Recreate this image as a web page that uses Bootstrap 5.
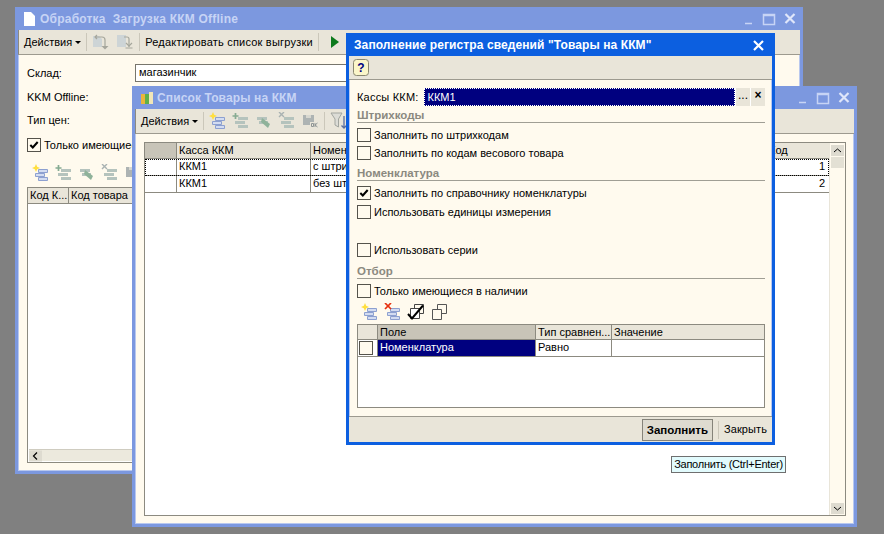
<!DOCTYPE html>
<html lang="ru">

<head>
    <meta charset="UTF-8">
    <title>Заполнение регистра сведений</title>
    <link href="https://cdn.jsdelivr.net/npm/bootstrap@5.3.0/dist/css/bootstrap.min.css" rel="stylesheet">
    <style>
        body {
            background: #808080;
            font: 11px/13px "Liberation Sans", Arial, sans-serif;
            color: #000;
            overflow: hidden;
        }

        /* windows on the desktop */
        .win {
            position: absolute;
            display: flex;
            flex-direction: column;
            background: #fffaee;
            border: 3px solid #7c98df;
            border-top-width: 1px;
            box-shadow: 0 0 0 1px #b9c8ee inset;
        }

        #winForm { left: 15px; top: 7px; width: 788px; height: 467px; }
        #winList { left: 132px; top: 86px; width: 725px; height: 441px; }
        #winFill { left: 346px; top: 33px; width: 429px; height: 412px; border-color: #0c5fe0; }

        .win-title {
            height: 22px;
            flex: none;
            font-weight: 700;
            font-size: 12px;
            letter-spacing: .12px;
            color: #c7d4f5;
            background: #7c98df;
            padding-left: 5px;
        }

        #winFill .win-title { background: #0c5fe0; color: #fff; letter-spacing: .1px; }
        #winForm .title-text { margin-left: 4px; letter-spacing: .22px; }
        #winList .title-text { margin-left: 3px; }

        .tool-row {
            height: 25px;
            flex: none;
            background: #e9e5d9;
            border-bottom: 1px solid #9d9a8f;
            border-left: 1px solid #8c8a80;
            padding-left: 5px;
        }

        #winFill .tool-row { border-left: 0; padding-left: 4px; }
        #winFill .help-row { height: 24px; }
        #winFill .foot-row { height: 26px; border-top: 1px solid #9d9a8f; border-bottom: 0; padding-right: 5px; }

        .tool-sep { width: 1px; height: 18px; background: #cbc7ba; margin: 0 5px; flex: none; }
        .tool-arrow { width: 0; height: 0; border: 3px solid transparent; border-top: 3px solid #000; border-bottom: 0; margin-left: 3px; }
        .tool-wide { letter-spacing: .21px; }
        .play-ico { margin-left: 6px; }
        .ico-step { margin-left: 5px; }
        #winForm .ico-step { margin-left: 6px; }

        .grid-box { border: 1px solid #8c8a80; background: #fff; position: relative; }
        .grid-head { height: 16px; background: #e9e5d9; border-bottom: 1px solid #8c8a80; }
        .grid-line { height: 17px; border-bottom: 1px solid #8c8a80; }
        .grid-cell { border-right: 1px solid #8c8a80; padding-left: 2px; white-space: nowrap; overflow: hidden; height: 100%; line-height: 15px; flex: none; }
        .grid-num { line-height: 15px; }
        .row-focus { outline: 1px dotted #000; outline-offset: -1px; }
        .head-dark { background: #c8c4b8; }

        .chk { width: 14px; height: 14px; border: 1px solid #55534c; background: #fffaee; flex: none; display: block; }
        .chk-line { height: 18px; }
        .chk-text { margin-left: 3px; }

        .grp-title { color: #8b8980; font-weight: 700; font-size: 11.5px; line-height: 14px; height: 17px; padding-top: 2px; border-bottom: 1px solid #a09e94; margin-top: 2px; }
        .grp-first { margin-top: 0; }
        .grp-last { margin-top: 3px; }
        .row-after { margin-top: 3px; }
        .row-step { margin-top: 1px; }
        .row-gap { margin-top: 20px; }

        .pick { background: #00007f; color: #fff; }
        .pick-field { line-height: 18px; outline: 1px dotted #fff; outline-offset: -1px; }
        .kkm-row { height: 18px; }
        .kkm-label { margin-right: 5px; letter-spacing: .2px; }
        .kkm-btn { width: 15px; background: #e9e5d9; border-left: 1px solid #fff; line-height: 15px; text-align: center; font-size: 12px; }

        .body-fill { padding: 8px 7px 0 8px; }
        .ico-row { display: flex; gap: 5px; height: 18px; margin-top: 3px; margin-bottom: 3px; padding-left: 4px; }
        .grid-end { margin-bottom: 8px; }
        #winFill .grid-head { height: 15px; }

        /* column widths */
        .col-chk { width: 20px; display: flex; align-items: center; padding-left: 1px; }
        .col-field { width: 158px; }
        .col-type { width: 76px; }
        .col-mark { width: 32px; }
        .col-kkm { width: 134px; }
        .col-nom { width: 200px; }
        .col-code { width: 41px; }
        .col-goods { width: 70px; }
        .col-val { padding-left: 2px; line-height: 15px; }
        .col-hid { margin-left: 258px; line-height: 15px; }

        /* form window */
        .form-body { padding: 8px 9px 8px 9px; }
        .form-row { height: 20px; line-height: 20px; }
        .form-row + .form-row { margin-top: 3px; }
        .form-first { margin-bottom: 1px; }
        .form-input { background: #fff; border: 1px solid #77756c; width: 600px; height: 18px; line-height: 15px; padding-left: 3px; margin-left: 72px; }
        .form-lab { width: 36px; flex: none; }
        .form-chk { height: 22px; margin-top: 4px; }
        .form-ico { display: flex; gap: 5px; height: 18px; margin: 8px 0 5px 5px; }
        .list-body { padding: 8px 8px 8px 9px; }
        .list-main { min-width: 0; }

        .hbar { height: 12px; margin: 1px; background: #ece9dd; border-top: 1px solid #cfccc0; }
        .sbar { width: 16px; flex: none; background: #fffaee; border-left: 1px solid #e9e5d9; padding: 2px 1px 0; }
        .sbar-thumb { width: 13px; height: 11px; background: #e3e0d4; margin-top: 1px; }
        .sbar-end { margin-top: auto; margin-bottom: 1px; }

        .tip {
            position: absolute;
            left: 671px;
            top: 456px;
            width: 115px;
            height: 17px;
            background: #e2fbfd;
            border: 1px solid #6f6f6f;
            line-height: 15px;
            text-align: center;
            white-space: nowrap;
            letter-spacing: -.25px;
        }

        .btn-fill {
            width: 71px;
            height: 22px;
            font-weight: 700;
            font-size: 11.5px;
            line-height: 20px;
            text-align: center;
            background: #dedbd0;
            border: 1px solid #85837a;
        }

        .foot-close { letter-spacing: .1px; }
    </style>
</head>

<body>
    <svg width="0" height="0" class="position-absolute">
        <defs>
            <g id="bars">
                <path d="M6.500 5.500h9v3h-9zM3.500 9.500h9v3h-9zM6.500 13.500h9v3h-9z" fill="#d3dcf1" stroke="#8da0d0" />
            </g>
            <symbol id="icoAdd" viewBox="0 0 18 18">
                <use href="#bars" />
                <path d="M4 0l1.200 2.800 2.800 1.200-2.800 1.200-1.200 2.800-1.200-2.800-2.800-1.200 2.800-1.200z" fill="#ffdf3f" />
            </symbol>
            <symbol id="icoDel" viewBox="0 0 18 18">
                <use href="#bars" />
                <path d="M1 0l6 6M7 0l-6 6" stroke="#e6300f" stroke-width="1.700" />
            </symbol>
            <symbol id="icoOff" viewBox="0 0 18 18">
                <path d="M6 5h10v3H6zM3 9h10v3H3zM6 13h10v3H6z" fill="#b5c3bd" />
                <path d="M3.500 1v6M.5 4h6" stroke="#86ab92" stroke-width="1.700" />
            </symbol>
            <symbol id="icoEdit" viewBox="0 0 18 18">
                <path d="M2 5h10v3H2zM4 9h9v3H4z" fill="#b5c3bd" />
                <path d="M7 6l8 6-2 4-7-6z" fill="#8fb29a" />
            </symbol>
            <symbol id="icoCross" viewBox="0 0 18 18">
                <path d="M6 5h10v3H6zM3 9h10v3H3zM6 13h10v3H6z" fill="#b5c3bd" />
                <path d="M1 0l5 5M6 0l-5 5" stroke="#a9b2b2" stroke-width="1.400" />
            </symbol>
            <symbol id="icoOk" viewBox="0 0 18 18">
                <path d="M2 3h11v10H2z" fill="#adb3b3" />
                <path d="M5 3h5v3H5z" fill="#d7d7d0" />
                <path d="M9 10h8v6H9z" fill="#e9e5d9" />
                <path d="M10.500 11.500h2v3h-2zM14 11v4M16.500 11l-2.500 2 2.500 2" fill="none" stroke="#8f9595" />
            </symbol>
            <symbol id="icoUp" viewBox="0 0 18 18">
                <path d="M1 3h6l3 3v8H1z" fill="#cdd4d6" />
                <path d="M5 2L3 4l2 2M3 4h7q3 0 3 3v6" fill="none" stroke="#a5a69c" stroke-width="1.200" />
                <path d="M9.500 13h7l-3.500 3.500z" fill="#a5a69c" />
            </symbol>
            <symbol id="icoDown" viewBox="0 0 18 18">
                <path d="M1 2h9v12H1z" fill="#cdd4d6" />
                <path d="M8 4h3q2 0 2 2v8" fill="none" stroke="#a5a69c" stroke-width="1.200" />
                <path d="M10 10l3 3 3-3M9.500 15h7" fill="none" stroke="#a5a69c" stroke-width="1.200" />
            </symbol>
            <symbol id="icoFilter" viewBox="0 0 18 18">
                <path d="M1 1h11L8.500 7v8L5 13V7z" fill="#dcdcd6" stroke="#a2a59f" />
                <path d="M14 4v12M11.500 13.500l2.500 2.500 2.500-2.500" fill="none" stroke="#5a6f9e" stroke-width="1.300" />
            </symbol>
            <symbol id="icoChecks" viewBox="0 0 18 18">
                <path d="M7.500 1.500h9v9h-9z" fill="none" stroke="#444" />
                <path d="M3.500 5.500h9v10h-9z" fill="#fff" stroke="#444" />
                <path d="M1 11l4 4.500 11-13" fill="none" stroke="#000" stroke-width="2" />
            </symbol>
            <symbol id="icoCopies" viewBox="0 0 18 18">
                <path d="M7.500 1.500h9v9h-9z" fill="#fffaee" stroke="#555" />
                <path d="M2.500 6.500h9v10h-9z" fill="#fffaee" stroke="#555" />
            </symbol>
            <symbol id="icoTick" viewBox="0 0 13 13">
                <path d="M2.500 6.500l2.700 2.700 5.300-6" fill="none" stroke="#000" stroke-width="2.200" />
            </symbol>
            <symbol id="winCtl" viewBox="0 0 58 14">
                <path d="M3 11.500h7M21.500 2.500h11v10h-11zM21 3.500h12" fill="none" stroke="#c7d4f5" stroke-width="1.500" />
                <path d="M43.500 2l9 9M52.500 2l-9 9" stroke="#dfe6fa" stroke-width="2.200" />
            </symbol>
        </defs>
    </svg>

    <!-- back window -->
    <div class="win" id="winForm">
        <div class="win-title d-flex align-items-center">
            <svg width="13" height="16" viewBox="0 0 13 16"><path d="M1 1h7l4 4v10H1z" fill="#fff" /></svg>
            <span class="title-text">Обработка &nbsp;Загрузка ККМ Offline</span>
            <svg width="58" height="14" class="ms-auto"><use href="#winCtl" /></svg>
        </div>
        <div class="tool-row d-flex align-items-center">
            <span>Действия</span><i class="tool-arrow"></i>
            <i class="tool-sep"></i>
            <svg width="18" height="18"><use href="#icoUp" /></svg>
            <svg width="18" height="18" class="ico-step"><use href="#icoDown" /></svg>
            <i class="tool-sep"></i>
            <span class="tool-wide">Редактировать список выгрузки</span>
            <i class="tool-sep"></i>
            <svg width="12" height="14" class="play-ico" viewBox="0 0 12 14"><path d="M1 1l8 6-8 6z" fill="#0c7a1c" /></svg>
        </div>
        <div class="flex-grow-1 d-flex flex-column form-body">
            <div class="form-row form-first d-flex align-items-center">
                <span class="form-lab">Склад:</span>
                <div class="form-input">магазинчик</div>
            </div>
            <div class="form-row">KKM Offline:</div>
            <div class="form-row">Тип цен:</div>
            <div class="d-flex align-items-center form-chk">
                <span class="chk"><svg width="12" height="12" viewBox="0 0 13 13" class="d-block"><use href="#icoTick" /></svg></span>
                <span class="chk-text">Только имеющиеся в наличии</span>
            </div>
            <div class="form-ico">
                <svg width="18" height="18"><use href="#icoAdd" /></svg>
                <svg width="18" height="18"><use href="#icoOff" /></svg>
                <svg width="18" height="18"><use href="#icoEdit" /></svg>
                <svg width="18" height="18"><use href="#icoCross" /></svg>
                <svg width="18" height="18"><use href="#icoOk" /></svg>
            </div>
            <div class="grid-box flex-grow-1 d-flex flex-column">
                <div class="grid-head d-flex">
                    <div class="grid-cell col-code">Код К...</div>
                    <div class="grid-cell col-goods">Код товара</div>
                </div>
                <div class="flex-grow-1"></div>
                <div class="hbar d-flex">
                    <svg width="13" height="12" viewBox="0 0 13 11"><path d="M0 0h13v11H0z" fill="#dedbd0" /><path d="M8 2L4.500 5.500 8 9" fill="none" stroke="#000" stroke-width="1.200" /></svg>
                </div>
            </div>
        </div>
    </div>

    <!-- list window -->
    <div class="win" id="winList">
        <div class="win-title d-flex align-items-center">
            <svg width="14" height="14" viewBox="0 0 14 14"><path d="M1 3h4v10H1z" fill="#e9b53a" /><path d="M5 3h4v10H5z" fill="#5eb04a" /><path d="M9 1h4v12H9z" fill="#f1e6b8" /></svg>
            <span class="title-text">Список Товары на ККМ</span>
            <svg width="58" height="14" class="ms-auto"><use href="#winCtl" /></svg>
        </div>
        <div class="tool-row d-flex align-items-center">
            <span>Действия</span><i class="tool-arrow"></i>
            <i class="tool-sep"></i>
            <svg width="18" height="18"><use href="#icoAdd" /></svg>
            <svg width="18" height="18" class="ico-step"><use href="#icoOff" /></svg>
            <svg width="18" height="18" class="ico-step"><use href="#icoEdit" /></svg>
            <svg width="18" height="18" class="ico-step"><use href="#icoCross" /></svg>
            <svg width="18" height="18" class="ico-step"><use href="#icoOk" /></svg>
            <i class="tool-sep"></i>
            <svg width="18" height="18"><use href="#icoFilter" /></svg>
        </div>
        <div class="flex-grow-1 d-flex flex-column list-body">
            <div class="grid-box flex-grow-1 d-flex flex-column">
                <div class="d-flex flex-grow-1">
                    <div class="flex-grow-1 list-main">
                        <div class="grid-head d-flex">
                            <div class="grid-cell col-mark head-dark"></div>
                            <div class="grid-cell col-kkm">Касса ККМ</div>
                            <div class="grid-cell col-nom">Номенклатура</div>
                            <div class="col-hid">Код</div>
                        </div>
                        <div class="grid-line d-flex row-focus">
                            <div class="grid-cell col-mark"></div>
                            <div class="grid-cell col-kkm">ККМ1</div>
                            <div class="grid-cell col-nom">с штрихкодом</div>
                            <div class="ms-auto pe-1 grid-num">1</div>
                        </div>
                        <div class="grid-line d-flex">
                            <div class="grid-cell col-mark"></div>
                            <div class="grid-cell col-kkm">ККМ1</div>
                            <div class="grid-cell col-nom">без штрихкода</div>
                            <div class="ms-auto pe-1 grid-num">2</div>
                        </div>
                    </div>
                    <div class="sbar d-flex flex-column">
                        <svg width="13" height="11" viewBox="0 0 13 11"><path d="M0 0h13v11H0z" fill="#dedbd0" /><path d="M3 7l3.500-3 3.500 3" fill="none" stroke="#000" /></svg>
                        <div class="sbar-thumb"></div>
                        <svg width="13" height="11" viewBox="0 0 13 11" class="sbar-end"><path d="M0 0h13v11H0z" fill="#dedbd0" /><path d="M3 4l3.500 3 3.500-3" fill="none" stroke="#000" /></svg>
                    </div>
                </div>
            </div>
        </div>
    </div>

    <!-- front dialog -->
    <div class="win" id="winFill">
        <div class="win-title d-flex align-items-center pe-1">
            <span>Заполнение регистра сведений "Товары на ККМ"</span>
            <svg width="11" height="11" viewBox="0 0 11 11" class="ms-auto me-1"><path d="M1 1l9 9M10 1l-9 9" stroke="#fff" stroke-width="2.200" /></svg>
        </div>
        <div class="tool-row help-row d-flex align-items-center">
            <svg width="16" height="17" viewBox="0 0 16 17"><rect x=".5" y=".5" width="15" height="16" rx="3" fill="#fbf6c9" stroke="#8a8770" /><text x="8" y="13" text-anchor="middle" font-size="12" font-weight="700" fill="#000080" font-family="Liberation Sans">?</text></svg>
        </div>
        <div class="flex-grow-1 d-flex flex-column body-fill">
            <div class="d-flex align-items-center kkm-row">
                <span class="kkm-label">Кассы ККМ:</span>
                <div class="flex-grow-1 pick h-100 ps-1 pick-field">ККМ1</div>
                <div class="kkm-btn h-100">...</div>
                <div class="kkm-btn h-100 fw-bold">×</div>
            </div>
            <div class="grp-title grp-first">Штрихкоды</div>
            <div class="d-flex align-items-center chk-line row-after"><span class="chk"></span><span class="chk-text">Заполнить по штрихкодам</span></div>
            <div class="d-flex align-items-center chk-line"><span class="chk"></span><span class="chk-text">Заполнить по кодам весового товара</span></div>
            <div class="grp-title">Номенклатура</div>
            <div class="d-flex align-items-center chk-line row-after">
                <span class="chk"><svg width="12" height="12" viewBox="0 0 13 13" class="d-block"><use href="#icoTick" /></svg></span><span class="chk-text">Заполнить по справочнику номенклатуры</span></div>
            <div class="d-flex align-items-center chk-line row-step"><span class="chk"></span><span class="chk-text">Использовать единицы измерения</span></div>
            <div class="d-flex align-items-center chk-line row-gap"><span class="chk"></span><span class="chk-text">Использовать серии</span></div>
            <div class="grp-title grp-last">Отбор</div>
            <div class="d-flex align-items-center chk-line row-after"><span class="chk"></span><span class="chk-text">Только имеющиеся в наличии</span></div>
            <div class="ico-row">
                <svg width="18" height="18"><use href="#icoAdd" /></svg>
                <svg width="18" height="18"><use href="#icoDel" /></svg>
                <svg width="18" height="18"><use href="#icoChecks" /></svg>
                <svg width="18" height="18"><use href="#icoCopies" /></svg>
            </div>
            <div class="grid-box flex-grow-1 grid-end">
                <div class="grid-head d-flex">
                    <div class="grid-cell col-chk"></div>
                    <div class="grid-cell col-field head-dark">Поле</div>
                    <div class="grid-cell col-type">Тип сравнен...</div>
                    <div class="col-val">Значение</div>
                </div>
                <div class="grid-line d-flex">
                    <div class="grid-cell col-chk"><span class="chk"></span></div>
                    <div class="grid-cell col-field pick">Номенклатура</div>
                    <div class="grid-cell col-type">Равно</div>
                </div>
            </div>
        </div>
        <div class="tool-row foot-row d-flex align-items-center justify-content-end">
            <div class="btn-fill">Заполнить</div>
            <i class="tool-sep"></i>
            <span class="foot-close">Закрыть</span>
        </div>
    </div>

    <div class="tip">Заполнить (Ctrl+Enter)</div>

    <script src="https://cdn.jsdelivr.net/npm/bootstrap@5.3.0/dist/js/bootstrap.bundle.min.js"></script>
</body>

</html>
